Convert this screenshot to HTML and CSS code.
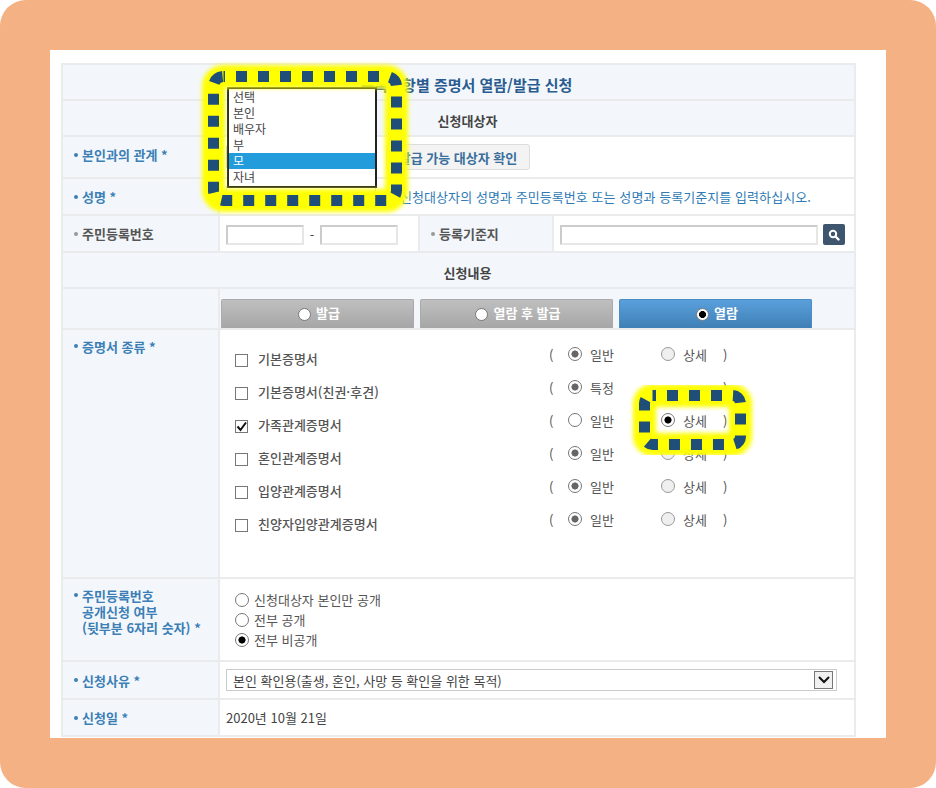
FILE: index.html
```html
<!DOCTYPE html>
<html lang="ko">
<head>
    <meta charset="UTF-8">
    <title>등록사항별 증명서 열람/발급 신청</title>
    <link rel="stylesheet" href="styles.css">
</head>
<body>
    <div class="frame">
        <div class="panel">
            <table class="form">
                <colgroup>
                    <col class="col-a"><col class="col-b"><col class="col-c"><col class="col-d">
                </colgroup>
                <tr class="h-title"><th colspan="4" class="title">등록사항별 증명서 열람/발급 신청</th></tr>
                <tr class="h-section"><th colspan="4" class="section">신청대상자</th></tr>
                <tr class="h-rel">
                    <th class="label req raised">본인과의 관계 *</th>
                    <td colspan="3">
                        <div class="inline">
                            <span class="closed-select"></span>
                            <button class="check-btn">발급 가능 대상자 확인</button>
                        </div>
                    </td>
                </tr>
                <tr class="h-name">
                    <th class="label req">성명 *</th>
                    <td colspan="3">
                        <div class="inline">
                            <span class="closed-select"></span>
                            <span class="hint">신청대상자의 성명과 주민등록번호 또는 성명과 등록기준지를 입력하십시오.</span>
                        </div>
                    </td>
                </tr>
                <tr class="h-id">
                    <th class="label">주민등록번호</th>
                    <td>
                        <div class="id-inputs">
                            <span class="text-box short"></span>
                            <span class="dash">-</span>
                            <span class="text-box short"></span>
                        </div>
                    </td>
                    <th class="label">등록기준지</th>
                    <td>
                        <div class="addr">
                            <span class="text-box long"></span>
                            <span class="search-btn">
                                <svg width="12" height="12" viewBox="0 0 12 12"><circle cx="5" cy="5" r="3.2" fill="none" stroke="#fff" stroke-width="2"/><path d="M7.5 7.5L10.5 10.5" stroke="#fff" stroke-width="2.4" stroke-linecap="round"/></svg>
                            </span>
                        </div>
                    </td>
                </tr>
                <tr class="h-section"><th colspan="4" class="section">신청내용</th></tr>
                <tr class="h-tabs">
                    <th class="blank"></th>
                    <th colspan="3" class="tabs-cell">
                        <div class="tabs">
                            <div class="tab"><span class="tab-radio"></span>발급</div>
                            <div class="tab"><span class="tab-radio"></span>열람 후 발급</div>
                            <div class="tab active"><span class="tab-radio on"></span>열람</div>
                        </div>
                    </th>
                </tr>
                <tr class="h-docs">
                    <th class="label req top">증명서 종류 *</th>
                    <td colspan="3" class="docs-cell">
                        <div class="doc-row">
                            <span class="check"></span><span class="doc-name">기본증명서</span>
                            <div class="doc-opts"><span class="paren">(</span><span class="radio gray"></span><span class="opt">일반</span><span class="radio off"></span><span class="opt">상세</span><span class="paren end">)</span></div>
                        </div>
                        <div class="doc-row">
                            <span class="check"></span><span class="doc-name">기본증명서(친권·후견)</span>
                            <div class="doc-opts"><span class="paren">(</span><span class="radio gray"></span><span class="opt">특정</span><span class="radio hidden"></span><span class="opt"></span><span class="paren end">)</span></div>
                        </div>
                        <div class="doc-row">
                            <span class="check on">
                                <svg width="13" height="13" viewBox="0 0 13 13"><path d="M2.5 6.5L5.5 10L11 2.5" fill="none" stroke="#111" stroke-width="2"/></svg>
                            </span><span class="doc-name">가족관계증명서</span>
                            <div class="doc-opts"><span class="paren">(</span><span class="radio"></span><span class="opt">일반</span><span class="radio black"></span><span class="opt">상세</span><span class="paren end">)</span></div>
                        </div>
                        <div class="doc-row">
                            <span class="check"></span><span class="doc-name">혼인관계증명서</span>
                            <div class="doc-opts"><span class="paren">(</span><span class="radio gray"></span><span class="opt">일반</span><span class="radio off"></span><span class="opt">상세</span><span class="paren end">)</span></div>
                        </div>
                        <div class="doc-row">
                            <span class="check"></span><span class="doc-name">입양관계증명서</span>
                            <div class="doc-opts"><span class="paren">(</span><span class="radio gray"></span><span class="opt">일반</span><span class="radio off"></span><span class="opt">상세</span><span class="paren end">)</span></div>
                        </div>
                        <div class="doc-row">
                            <span class="check"></span><span class="doc-name">친양자입양관계증명서</span>
                            <div class="doc-opts"><span class="paren">(</span><span class="radio gray"></span><span class="opt">일반</span><span class="radio off"></span><span class="opt">상세</span><span class="paren end">)</span></div>
                        </div>
                    </td>
                </tr>
                <tr class="h-open">
                    <th class="label req top multi">주민등록번호<br>공개신청 여부<br>(뒷부분 6자리 숫자) *</th>
                    <td colspan="3" class="open-cell">
                        <div class="open-row"><span class="radio"></span>신청대상자 본인만 공개</div>
                        <div class="open-row"><span class="radio"></span>전부 공개</div>
                        <div class="open-row"><span class="radio black"></span>전부 비공개</div>
                    </td>
                </tr>
                <tr class="h-reason">
                    <th class="label req">신청사유 *</th>
                    <td colspan="3">
                        <div class="reason-select">
                            <span>본인 확인용(출생, 혼인, 사망 등 확인을 위한 목적)</span>
                            <span class="arrow">
                                <svg width="14" height="10" viewBox="0 0 14 10"><path d="M2 2L7 7L12 2" fill="none" stroke="#111" stroke-width="2"/></svg>
                            </span>
                        </div>
                    </td>
                </tr>
                <tr class="h-date">
                    <th class="label req">신청일 *</th>
                    <td colspan="3">2020년 10월 21일</td>
                </tr>
            </table>

            <!-- 펼쳐진 선택 목록 -->
            <ul class="dropdown">
                <li>선택</li>
                <li>본인</li>
                <li>배우자</li>
                <li>부</li>
                <li class="selected">모</li>
                <li>자녀</li>
            </ul>
        </div>

        <!-- 노란 강조 표시 -->
        <svg class="marks" width="936" height="788" viewBox="0 0 936 788">
            <defs>
                <filter id="glow" x="-20%" y="-20%" width="140%" height="140%"><feGaussianBlur stdDeviation="2"/></filter>
            </defs>
            <rect x="213.5" y="76.5" width="183" height="124" rx="10" fill="none" stroke="#ffff00" stroke-width="23" filter="url(#glow)"/>
            <rect x="213.5" y="76.5" width="183" height="124" rx="10" fill="none" stroke="#1f4e79" stroke-width="11" stroke-dasharray="11 11" stroke-dashoffset="9.5"/>
            <rect x="644.5" y="395.5" width="96" height="49" rx="8" fill="none" stroke="#ffff00" stroke-width="23" filter="url(#glow)"/>
            <rect x="644.5" y="395.5" width="96" height="49" rx="8" fill="none" stroke="#1f4e79" stroke-width="11" stroke-dasharray="11 11" stroke-dashoffset="7.5"/>
        </svg>
    </div>
</body>
</html>
```

FILE: styles.css
```css
* {
    margin: 0;
    padding: 0;
    box-sizing: border-box;
}

body {
    width: 936px;
    height: 788px;
    background: #fff;
    overflow: hidden;
    font-family: "Noto Sans CJK KR", "Noto Sans", sans-serif;
    font-size: 13px;
    color: #444;
}

.frame {
    position: relative;
    width: 936px;
    height: 788px;
    padding: 50px;
    background: #f4b183;
    border-radius: 26px;
}

.panel {
    position: relative;
    height: 688px;
    padding: 13px 0 0 11px;
    background: #fff;
}

.form {
    width: 793px;
    table-layout: fixed;
    border-collapse: collapse;
}

.col-a { width: 157px; }
.col-b { width: 200px; }
.col-c { width: 134px; }
.col-d { width: 302px; }

.form th,
.form td {
    border: 2px solid #e9ebec;
    text-align: left;
    font-weight: normal;
    padding: 0 6px;
    vertical-align: middle;
}

.form th {
    background: #f3f7fb;
}

.h-title { height: 36px; }
.h-section { height: 36px; }
.h-rel { height: 42px; }
.h-name { height: 37px; }
.h-id { height: 37px; }
.h-tabs { height: 39px; }
.h-docs { height: 249px; }
.h-open { height: 83px; }
.h-reason { height: 38px; }
.h-date { height: 37px; }

.form .title {
    padding: 5px 0 0 16px;
    text-align: center;
    font-size: 15px;
    font-weight: 700;
    color: #2b5c8f;
}

.form .section {
    padding: 5px 0 0 18px;
    text-align: center;
    font-weight: 700;
    color: #444;
}

.form .label {
    position: relative;
    padding-left: 19px;
    font-weight: 700;
    color: #555;
}

.form .label::before {
    content: "";
    position: absolute;
    left: 11px;
    top: 50%;
    width: 4px;
    height: 4px;
    margin-top: -2px;
    border-radius: 50%;
    background: #999;
}

.form .req {
    color: #3b7fb6;
}

.form .req::before {
    background: #3b7fb6;
}

.form .raised {
    padding-bottom: 5px;
}

.form .raised::before {
    margin-top: -4px;
}

.form .top {
    vertical-align: top;
    padding-top: 7px;
}

.form .top::before {
    top: 16px;
}

.form .multi {
    padding-top: 9px;
    line-height: 16px;
}

.inline {
    display: flex;
    align-items: center;
}

.closed-select {
    width: 150px;
    height: 22px;
    border: 1px solid #ccc;
}

.check-btn {
    margin-left: 10px;
    width: 144px;
    height: 26px;
    border: 1px solid #ddd;
    border-radius: 3px;
    background: #f3f3f3;
    font: 700 13px "Noto Sans CJK KR", sans-serif;
    color: #3a6f9c;
    white-space: nowrap;
}

.hint {
    margin-left: 24px;
    letter-spacing: 0.07px;
    color: #2f7ab5;
    white-space: nowrap;
}

.id-inputs,
.addr {
    display: flex;
    align-items: center;
    padding-top: 2px;
}

.text-box {
    display: block;
    height: 20px;
    border: 2px solid #e6e6e6;
    border-top-color: #ccc;
    border-left-color: #ccc;
    background: #fff;
}

.text-box.short { width: 78px; }
.text-box.long { width: 258px; }

.dash {
    width: 16px;
    text-align: center;
}

.search-btn {
    display: flex;
    align-items: center;
    justify-content: center;
    width: 22px;
    height: 21px;
    margin-left: 5px;
    border-radius: 2px;
    background: #3d566e;
}

.form .tabs-cell {
    padding: 10px 0 0 0;
    vertical-align: bottom;
}

.tabs {
    display: flex;
    gap: 6px;
    padding-left: 1px;
}

.tab {
    display: flex;
    align-items: center;
    justify-content: center;
    width: 193px;
    height: 29px;
    padding: 0 0 4px 3px;
    border: 1px solid #aaa;
    border-bottom: 0;
    border-radius: 2px 2px 0 0;
    background: linear-gradient(#bfbfbf, #a6a6a6);
    color: #fff;
    font-weight: 700;
}

.tab.active {
    border-color: #4c8cc4;
    background: linear-gradient(#5aa0dc, #3f7fb5);
}

.tab-radio {
    width: 13px;
    height: 13px;
    margin: 4px 5px 0 0;
    border: 1px solid #777;
    border-radius: 50%;
    background: #fff;
}

.tab-radio.on {
    background: radial-gradient(circle, #000 0 3.2px, #fff 3.8px);
}

.docs-cell {
    vertical-align: top !important;
    padding: 15px 0 0 15px !important;
}

.doc-row {
    display: flex;
    height: 33px;
    align-items: flex-start;
}

.check {
    flex: none;
    width: 13px;
    height: 13px;
    margin-top: 9px;
    border: 1px solid #777;
    background: #fff;
}

.check svg {
    display: block;
    margin: -1px;
}

.doc-name {
    width: 291px;
    margin-left: 10px;
    margin-top: 5px;
    font-weight: 500;
    color: #555;
    line-height: 18px;
}

.doc-opts {
    display: flex;
    align-items: center;
    height: 18px;
    color: #555;
}

.paren {
    width: 19px;
}

.paren.end {
    margin-left: -31px;
}

.opt {
    width: 71px;
    margin-left: 8px;
}

.radio {
    flex: none;
    display: inline-block;
    width: 14px;
    height: 14px;
    border: 1px solid #777;
    border-radius: 50%;
    background: #fff;
}

.radio.gray {
    background: radial-gradient(circle, #666 0 3.2px, #fff 3.9px);
}

.radio.black {
    background: radial-gradient(circle, #000 0 3.2px, #fff 3.9px);
}

.radio.off {
    border-color: #999;
    background: #efefef;
}

.radio.hidden {
    border-color: transparent;
    background: transparent;
}

.open-cell {
    padding: 0 0 0 15px !important;
}

.open-row {
    display: flex;
    align-items: center;
    gap: 5px;
    height: 20px;
    color: #555;
}

.reason-select {
    display: flex;
    align-items: center;
    justify-content: space-between;
    width: 611px;
    height: 22px;
    padding: 0 3px 0 6px;
    border: 1px solid #ccc;
}

.arrow {
    display: flex;
    align-items: center;
    justify-content: center;
    width: 19px;
    height: 18px;
    border: 1px solid #777;
    background: #f0f0f0;
}

.dropdown {
    position: absolute;
    left: 177px;
    top: 37px;
    width: 150px;
    height: 101px;
    border: 2px solid #222;
    background: #fff;
    list-style: none;
    font-size: 12px;
    color: #444;
}

.dropdown li {
    height: 16px;
    line-height: 16px;
    padding-left: 4px;
}

.dropdown .selected {
    background: #229cdb;
    color: #fff;
}

.marks {
    position: absolute;
    left: 0;
    top: 0;
    pointer-events: none;
}
```
